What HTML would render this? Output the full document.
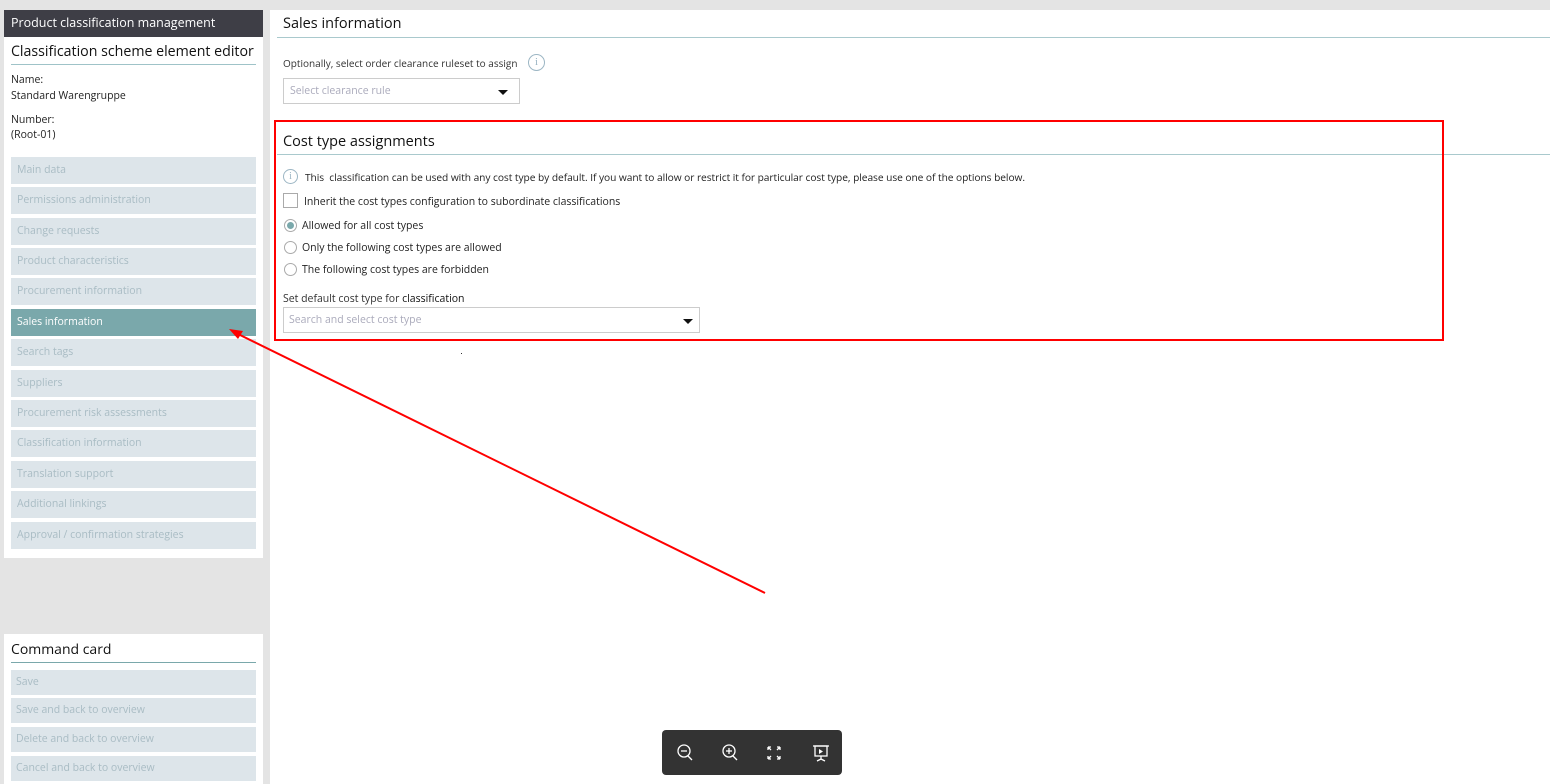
<!DOCTYPE html>
<html><head><style>
*{margin:0;padding:0;box-sizing:border-box}
body{width:1550px;height:784px;background:#e4e4e4;font-family:"Open Sans","Liberation Sans",sans-serif;position:relative;overflow:hidden;color:#222}
.a{position:absolute}
.mi{position:absolute;left:11px;width:245px;height:27px;background:#dde5ea;color:#a9bcc4;font-size:10.5px;line-height:27px;padding-left:6px}
.ci{position:absolute;left:11px;width:245px;height:25px;background:#dde5ea;color:#a9bcc4;font-size:10.5px;line-height:25px;padding-left:5px}
.t{font-size:10.5px}
.radio{position:absolute;width:13px;height:13px;border:1px solid #aaa;border-radius:50%;background:#fff}
</style></head><body>
<div class="a" style="left:4px;top:10px;width:259px;height:548px;background:#fff"></div>
<div class="a" style="left:4px;top:10px;width:259px;height:27px;background:#3e3e46;color:#fff;font-size:12.5px;line-height:26px;padding-left:7px">Product classification management</div>
<div class="a" style="left:11px;top:42px;font-size:14.2px;color:#111">Classification scheme element editor</div>
<div class="a" style="left:11px;top:64px;width:245px;height:1px;background:#9fc3c8"></div>
<div class="a t" style="left:11px;top:73px">Name:</div>
<div class="a t" style="left:11px;top:89px">Standard Warengruppe</div>
<div class="a t" style="left:11px;top:113px">Number:</div>
<div class="a t" style="left:11px;top:128px">(Root-01)</div>
<div class="mi" style="top:157px">Main data</div>
<div class="mi" style="top:187px">Permissions administration</div>
<div class="mi" style="top:218px">Change requests</div>
<div class="mi" style="top:248px">Product characteristics</div>
<div class="mi" style="top:278px">Procurement information</div>
<div class="mi" style="top:309px;background:#7aa8ab;color:#fff">Sales information</div>
<div class="mi" style="top:339px">Search tags</div>
<div class="mi" style="top:370px">Suppliers</div>
<div class="mi" style="top:400px">Procurement risk assessments</div>
<div class="mi" style="top:430px">Classification information</div>
<div class="mi" style="top:461px">Translation support</div>
<div class="mi" style="top:491px">Additional linkings</div>
<div class="mi" style="top:522px">Approval / confirmation strategies</div>

<div class="a" style="left:4px;top:634px;width:259px;height:150px;background:#fff"></div>
<div class="a" style="left:11px;top:640px;font-size:14px;color:#111">Command card</div>
<div class="a" style="left:11px;top:662px;width:245px;height:1px;background:#7aa8ab"></div>
<div class="ci" style="top:670px">Save</div>
<div class="ci" style="top:698px">Save and back to overview</div>
<div class="ci" style="top:727px">Delete and back to overview</div>
<div class="ci" style="top:756px">Cancel and back to overview</div>

<div class="a" style="left:270px;top:10px;width:1280px;height:774px;background:#fff"></div>
<div class="a" style="left:283px;top:14px;font-size:14.5px;color:#111">Sales information</div>
<div class="a" style="left:277px;top:37px;width:1273px;height:1px;background:#a9c9cd"></div>
<div class="a" style="left:283px;top:56px;font-size:10px;color:#333">Optionally, select order clearance ruleset to assign</div>
<div class="a" style="left:528px;top:54px;width:17px;height:17px;border:1px solid #9cb6c4;border-radius:50%;color:#9cb6c4;font-size:11px;text-align:center;line-height:15px;font-family:'Liberation Serif',serif">i</div>
<div class="a" style="left:283px;top:78px;width:237px;height:26px;border:1px solid #ccc;color:#aab;font-size:10.5px;line-height:24px;padding-left:6px">Select clearance rule<span style="position:absolute;right:11px;top:11px;border-left:5px solid transparent;border-right:5px solid transparent;border-top:5px solid #111"></span></div>

<div class="a" style="left:283px;top:132px;font-size:14.5px;color:#111">Cost type assignments</div>
<div class="a" style="left:277px;top:154px;width:1273px;height:1px;background:#a9c9cd"></div>
<div class="a" style="left:283px;top:169px;width:15px;height:15px;border:1px solid #9cb6c4;border-radius:50%;color:#9cb6c4;font-size:10px;text-align:center;line-height:13px;font-family:'Liberation Serif',serif">i</div>
<div class="a" style="left:305px;top:170px;font-size:10.2px;color:#222;letter-spacing:-0.05px">This&nbsp; classification can be used with any cost type by default. If you want to allow or restrict it for particular cost type, please use one of the options below.</div>
<div class="a" style="left:283px;top:193px;width:15px;height:15px;border:1px solid #aaa"></div>
<div class="a" style="left:304px;top:195px;font-size:10.5px;color:#222">Inherit the cost types configuration to subordinate classifications</div>
<div class="radio" style="left:284px;top:219px"><div style="position:absolute;left:2px;top:2px;width:7px;height:7px;border-radius:50%;background:#7aa8ab"></div></div>
<div class="a" style="left:302px;top:219px;font-size:10.5px">Allowed for all cost types</div>
<div class="radio" style="left:284px;top:241px"></div>
<div class="a" style="left:302px;top:241px;font-size:10.5px">Only the following cost types are allowed</div>
<div class="radio" style="left:284px;top:263px"></div>
<div class="a" style="left:302px;top:263px;font-size:10.5px">The following cost types are forbidden</div>
<div class="a" style="left:283px;top:292px;font-size:10.5px;color:#333">Set default cost type for <span style="color:#111">classification</span></div>
<div class="a" style="left:283px;top:307px;width:417px;height:26px;border:1px solid #ccc;color:#aab;font-size:10.5px;line-height:24px;padding-left:5px">Search and select cost type<span style="position:absolute;right:6px;top:11px;border-left:5px solid transparent;border-right:5px solid transparent;border-top:5px solid #111"></span></div>
<div class="a" style="left:461px;top:353px;width:1px;height:1px;background:#333"></div>

<div class="a" style="left:274px;top:120px;width:1170px;height:221px;border:2px solid #f00"></div>
<svg class="a" style="left:0;top:0" width="1550" height="784"><line x1="765" y1="593" x2="236" y2="333" stroke="#f00" stroke-width="2"/><polygon points="229,329 243,331 238,339" fill="#f00"/></svg>

<div class="a" style="left:662px;top:730px;width:180px;height:45px;background:#333;border-radius:4px"></div>
<svg class="a" style="left:662px;top:730px" width="180" height="45" fill="none" stroke="#fff" stroke-width="1.3">
<circle cx="22" cy="21" r="6"/><line x1="26" y1="26" x2="30" y2="30"/><line x1="19" y1="21" x2="25" y2="21"/>
<circle cx="67" cy="21" r="6"/><line x1="71" y1="26" x2="75" y2="30"/><line x1="64" y1="21" x2="70" y2="21"/><line x1="67" y1="18" x2="67" y2="24"/>
<path d="M106 17l3 3M106 17h3M106 17v3M118 17l-3 3M118 17h-3M118 17v3M106 29l3-3M106 29h3M106 29v-3M118 29l-3-3M118 29h-3M118 29v-3"/>
<rect x="153" y="16" width="12" height="10"/><line x1="151" y1="16" x2="167" y2="16"/><path d="M159 26v3M155 31l4-2 4 2"/><polygon points="157,19 157,24 161,21.5" fill="#fff" stroke="none"/>
</svg>
</body></html>
